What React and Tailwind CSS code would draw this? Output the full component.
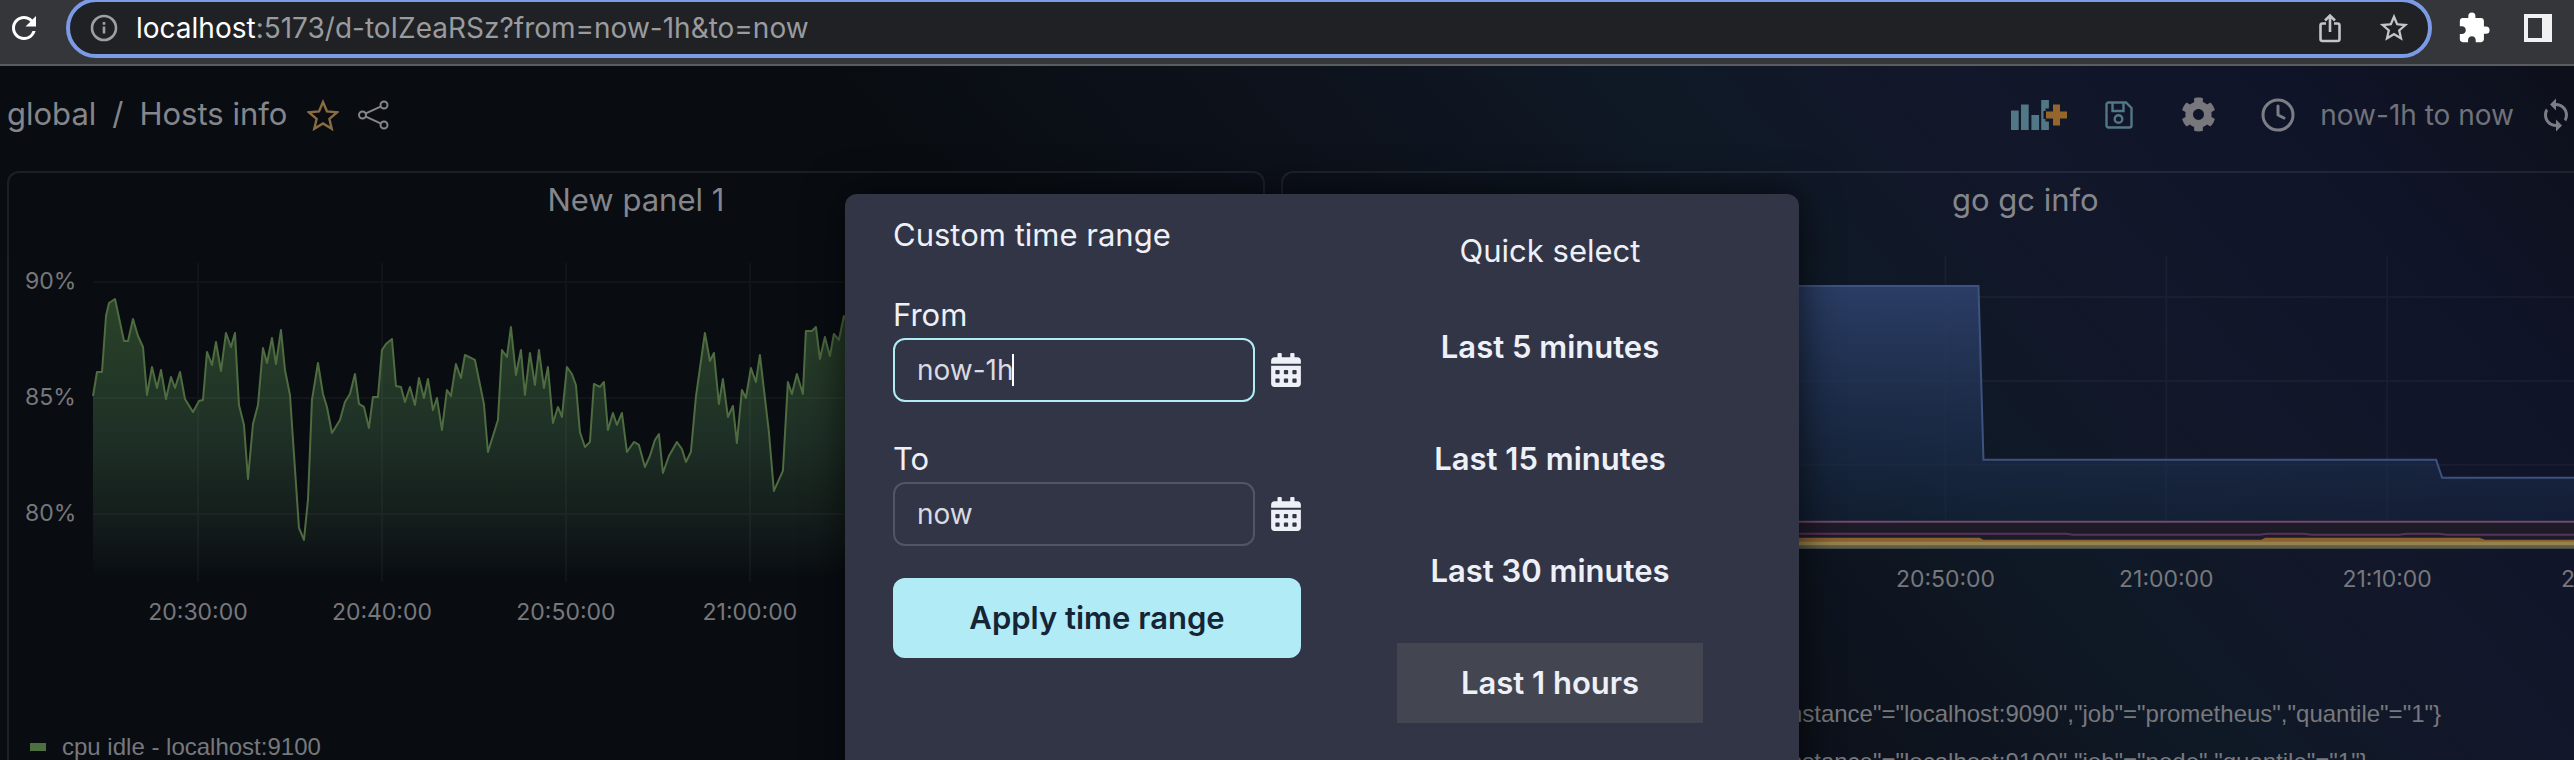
import { FaCalendarAlt, FaCog } from "react-icons/fa";
import { MdExtension, MdStarBorder, MdRefresh, MdSync } from "react-icons/md";
import { FiClock } from "react-icons/fi";

const idlePath =
  "M93,396 L97,372 L102,372 L106,316 L109,303 L115,299 L124,341 L128,341 L133,319 L138,336 L143,347 L147,395 L152,367 L157,388 L161,370 L166,399 L171,377 L175,388 L180,372 L185,399 L193,412 L199,401 L203,400 L207,352 L212,365 L216,342 L221,371 L226,333 L231,347 L235,333 L239,405 L244,425 L248,479 L253,424 L258,405 L263,348 L267,363 L272,338 L276,364 L281,330 L285,370 L290,395 L299,528 L304,540 L308,500 L312,400 L318,363 L323,394 L327,407 L332,433 L340,420 L345,402 L350,394 L355,374 L359,404 L364,407 L369,428 L373,397 L378,397 L382,350 L386,344 L392,339 L396,386 L401,387 L405,402 L410,387 L415,405 L419,378 L424,398 L428,379 L433,410 L437,398 L442,430 L447,390 L451,396 L456,364 L461,378 L465,355 L475,360 L484,404 L488,452 L498,420 L502,350 L507,357 L511,327 L516,375 L521,350 L525,395 L530,353 L535,385 L539,350 L544,388 L548,367 L553,423 L558,407 L562,417 L567,367 L572,374 L576,385 L580,432 L585,447 L590,442 L594,384 L600,387 L604,382 L608,430 L613,413 L617,425 L622,413 L627,452 L634,442 L639,445 L645,467 L650,456 L655,440 L659,434 L663,473 L669,456 L677,442 L682,449 L686,462 L691,452 L696,397 L705,333 L710,361 L714,353 L719,404 L723,379 L728,417 L733,406 L737,443 L742,390 L746,398 L751,368 L756,382 L760,355 L769,432 L774,491 L783,471 L788,382 L792,394 L797,374 L803,394 L806,331 L812,331 L816,327 L820,359 L825,337 L830,356 L834,334 L839,340 L844,316 L852,330 L860,360 L880,340 L900,390 L960,350";

function InfoIcon() {
  return (
    <svg className="size-7" viewBox="0 0 28 28" fill="none" stroke="currentColor" strokeWidth="2.6" aria-hidden="true">
      <circle cx="14" cy="14" r="12" />
      <path d="M14 12.5v7M14 8v2.8" />
    </svg>
  );
}

function UploadIcon() {
  return (
    <svg className="h-[30px] w-6" viewBox="0 0 24 30" fill="none" stroke="currentColor" strokeWidth="2.6" aria-hidden="true">
      <path d="M8 10.500H4.500a2 2 0 0 0-2 2V26a2 2 0 0 0 2 2h15a2 2 0 0 0 2-2V12.500a2 2 0 0 0-2-2H16M12 19V3M7 7.500 12 2.500l5 5" />
    </svg>
  );
}

function SidePanelIcon() {
  return (
    <svg className="size-7" viewBox="0 0 28 28" aria-hidden="true">
      <path fill="currentColor" fillRule="evenodd" d="M0 0h28v28H0zM4 4v20h14V4z" />
    </svg>
  );
}

function StarIcon() {
  return (
    <svg className="size-8" viewBox="0 0 32 32" fill="none" stroke="#8a6c43" strokeWidth="2.4" strokeLinejoin="miter" aria-hidden="true">
      <path d="M16 3l4 9.400 10 .9-7.600 6.600 2.300 9.900L16 24.500l-8.700 5.300 2.300-9.900L2 13.300l10-.9z" />
    </svg>
  );
}

function ShareNodesIcon() {
  return (
    <svg className="size-8" viewBox="0 0 32 32" fill="none" stroke="currentColor" strokeWidth="2" aria-hidden="true">
      <circle cx="5.500" cy="16" r="3.500" />
      <circle cx="27" cy="6" r="3.500" />
      <circle cx="27" cy="26" r="3.500" />
      <path d="M8.800 14.300 23.600 7.600M8.800 17.700l14.800 6.700" />
    </svg>
  );
}

function AddPanelIcon() {
  return (
    <svg className="h-9 w-14" viewBox="0 0 56 36" aria-hidden="true">
      <path fill="#527786" d="M0 13.500h7.700V33H0zM10 7.500h7.700V33H10zM20.400 18h7.700v15h-7.700zM30.200 3h7.700v8.500h-3.400v2.500h-2v8h2v2.500h3.400V33h-7.700z" />
      <path fill="#94662c" d="M42 7.500h7v7h7v7h-7v7h-7v-7h-7v-7h7z" />
    </svg>
  );
}

function SaveIcon() {
  return (
    <svg className="size-7" viewBox="0 0 28 28" fill="none" stroke="#527786" strokeWidth="2.400" aria-hidden="true">
      <path d="M1.500 3.500a2 2 0 0 1 2-2H21l5.500 5.500v17.500a2 2 0 0 1-2 2h-21a2 2 0 0 1-2-2zM7.500 1.500V10h11V1.500" />
      <circle cx="13.500" cy="18" r="3.800" />
    </svg>
  );
}

function BrowserBar() {
  return (
    <div className="flex h-[66px] items-start border-b-2 border-[#5b5c60] bg-[#35363a] text-[#e8eaed]">
      <button aria-label="Reload" className="ml-1 mt-2 flex size-10 shrink-0 items-center justify-center text-white">
        <MdRefresh className="size-9" />
      </button>
      <div className="-mt-0.5 ml-[22px] flex h-[60px] min-w-0 flex-1 items-center rounded-full border-4 border-[#7c9be6] bg-[#202124] pl-5 pr-[17px]">
        <span className="text-[#9aa0a6]">
          <InfoIcon />
        </span>
        <a href="#address" className="ml-[18px] flex-1 truncate text-[28px] text-[#9a9b9f]">
          <span className="text-white">localhost</span>:5173/d-toIZeaRSz?from=now-1h&amp;to=now
        </a>
        <button aria-label="Share this page" className="mr-[35px] text-[#c4c5c8]">
          <UploadIcon />
        </button>
        <button aria-label="Bookmark this page" className="text-[#c4c5c8]">
          <MdStarBorder className="size-[34px]" />
        </button>
      </div>
      <div className="ml-[25px] mr-[22px] flex h-14 items-center gap-[33px] text-white">
        <button aria-label="Extensions">
          <MdExtension className="size-[34px]" />
        </button>
        <button aria-label="Side panel" className="text-[#f1f1f4]">
          <SidePanelIcon />
        </button>
      </div>
    </div>
  );
}

function Header() {
  return (
    <header className="flex h-[105px] items-center pb-2 pl-[7px] text-[#85868c]">
      <h1 className="text-[31px]">
        global<span className="px-4">/</span>Hosts info
      </h1>
      <div className="ml-5 flex gap-[18px]">
        <button aria-label="Favourite">
          <StarIcon />
        </button>
        <button aria-label="Share">
          <ShareNodesIcon />
        </button>
      </div>
      <div className="ml-auto flex items-center text-[28px] text-[#70727c]">
        <button aria-label="Add panel" className="mr-[38px]">
          <AddPanelIcon />
        </button>
        <button aria-label="Save" className="mr-12">
          <SaveIcon />
        </button>
        <button aria-label="Settings" className="mr-11 text-[#77777c]">
          <FaCog className="size-[35px]" />
        </button>
        <button className="mr-6 flex items-center gap-6">
          <FiClock className="size-9 text-[#7c7d85]" />
          now-1h to now
        </button>
        <button aria-label="Refresh" className="text-[#7c7d85]">
          <MdSync className="size-9" />
        </button>
      </div>
    </header>
  );
}

function IdleChart() {
  return (
    <svg className="block h-auto w-full" viewBox="9 230 1254 410" fontSize="23" fill="#77787d" role="img" aria-label="cpu idle">
      <defs>
        <linearGradient id="idle" x1="0" x2="0" y1="300" y2="577" gradientUnits="userSpaceOnUse">
          <stop offset="0" stopColor="#2a4229" />
          <stop offset=".5" stopColor="#1e3026" />
          <stop offset=".8" stopColor="#1b2720" stopOpacity=".6" />
          <stop offset="1" stopColor="#1e2a26" stopOpacity="0" />
        </linearGradient>
      </defs>
      <path fill="url(#idle)" d={idlePath + " V577 H93 Z"} />
      <path fill="none" stroke="#ffffff" strokeOpacity=".035" strokeWidth="2" d="M93 282H1240M93 398H1240M93 514H1240M198 263V582M382 263V582M566 263V582M750 263V582" />
      <path fill="none" stroke="#4e6c40" strokeWidth="2" strokeLinejoin="round" d={idlePath} />
      <text x="25" y="289">90%</text>
      <text x="25" y="405">85%</text>
      <text x="25" y="521">80%</text>
      <g textAnchor="middle">
        <text x="198" y="620">20:30:00</text>
        <text x="382" y="620">20:40:00</text>
        <text x="566" y="620">20:50:00</text>
        <text x="750" y="620">21:00:00</text>
      </g>
    </svg>
  );
}

function GcChart() {
  return (
    <svg className="block h-auto w-full" viewBox="1283 230 1486 370" fontSize="23" fill="#77787d" role="img" aria-label="go gc duration">
      <defs>
        <linearGradient id="gc" x1="0" x2="0" y1="285" y2="549" gradientUnits="userSpaceOnUse">
          <stop offset="0" stopColor="#2c3f68" stopOpacity=".95" />
          <stop offset=".65" stopColor="#1d3050" stopOpacity=".6" />
          <stop offset="1" stopColor="#142a44" stopOpacity=".3" />
        </linearGradient>
      </defs>
      <path fill="none" stroke="#ffffff" strokeOpacity=".035" strokeWidth="2" d="M1400 297H2750M1400 381H2750M1400 465H2750M1946 256V549M2167 256V549M2388 256V549M2609 256V549" />
      <path fill="url(#gc)" d="M1400 286H1979L1984 460H2437L2443 478H2760V549H1400z" />
      <path fill="none" stroke="#3d5280" strokeWidth="2" d="M1400 286H1979L1984 460H2437L2443 478H2760" />
      <path fill="#1e1b28" d="M1400 522H2760V539H1400z" />
      <path fill="none" stroke="#704a68" strokeWidth="2" d="M1400 522H2760" />
      <path fill="none" stroke="#57335a" strokeWidth="2" d="M1400 534H2066L2074 535H2260L2268 534H2305L2312 535H2400L2408 534H2440L2448 535H2760" />
      <path fill="#8a6230" d="M1400 538H1980L1984 540H2262L2266 538H2480L2486 540H2760V545H1400z" />
      <path fill="#96824a" d="M1400 542H2760V546H1400z" />
      <path fill="#5c5d4c" d="M1400 546H2760V549H1400z" />
      <g textAnchor="middle">
        <text x="1946" y="587">20:50:00</text>
        <text x="2167" y="587">21:00:00</text>
        <text x="2388" y="587">21:10:00</text>
        <text x="2609" y="587">21:20:00</text>
      </g>
    </svg>
  );
}

function Panel({ title, children }) {
  return (
    <section className="rounded-t-xl border-2 border-b-0 border-white/8">
      <h2 className="flex h-[57px] items-center justify-center pb-0.5 text-[31px] text-[#85868c]">{title}</h2>
      {children}
    </section>
  );
}

function TimeField({ id, label, value, active }) {
  return (
    <div>
      <label htmlFor={id} className="block text-[31px] leading-[42px]">
        {label}
      </label>
      <div className="mt-0.5 flex items-center gap-4">
        <div className="relative flex-1">
          <input
            id={id}
            defaultValue={value}
            autoFocus={active}
            className="block h-16 w-full rounded-xl border-2 border-white/16 bg-transparent px-[22px] text-[28px] text-[#d9dbe4] caret-transparent outline-none focus:border-[#b0ebf6]"
          />
          {active && <span aria-hidden="true" className="absolute left-[119px] top-4 h-8 w-0.5 bg-white" />}
        </div>
        <button type="button" aria-label={"Pick " + label + " date"}>
          <FaCalendarAlt className="h-[34px] w-[30px]" />
        </button>
      </div>
    </div>
  );
}

function TimeDialog() {
  const ranges = ["Last 5 minutes", "Last 15 minutes", "Last 30 minutes", "Last 1 hours"];
  return (
    <div role="dialog" aria-label="Time range" className="absolute left-[845px] top-[194px] flex h-[700px] w-[954px] gap-24 rounded-xl bg-[#323546] pl-12 pr-24 text-[#eef0f8] shadow-[0_0_40px_rgba(0,0,0,0.7)]">
      <form className="flex w-[408px] flex-col pt-5">
        <h2 className="text-[31px] leading-[42px]">Custom time range</h2>
        <div className="mt-[38px] flex flex-col gap-9">
          <TimeField id="from" label="From" value="now-1h" active />
          <TimeField id="to" label="To" value="now" />
        </div>
        <button type="button" className="mt-8 h-20 rounded-xl bg-[#b0ebf6] text-[31px] font-semibold text-[#152536]">
          Apply time range
        </button>
      </form>
      <div className="flex flex-1 flex-col items-stretch pt-9">
        <h2 className="text-center text-[31px] leading-[42px]">Quick select</h2>
        <div className="mt-[35px] flex flex-col gap-8">
          {ranges.map((r) => (
            <button key={r} type="button" className="h-20 text-[31px] font-semibold last:bg-[#434551]">
              {r}
            </button>
          ))}
        </div>
      </div>
    </div>
  );
}

export default function App() {
  return (
    <div className="relative h-screen overflow-hidden bg-[#090d12] font-['Inter','Liberation_Sans',sans-serif]">
      <BrowserBar />
      <main className="h-full bg-[linear-gradient(49deg,#090d12_46%,#0d121c_60%,#0f1926_71%,#12172a_80%,#101429_90%,#0d101a_100%)]">
        <Header />
        <div className="grid h-full grid-cols-[49%_58%] gap-4 pl-[7px]">
          <Panel title="New panel 1">
            <IdleChart />
            <p className="mt-[89px] flex items-center gap-4 pl-[21px] font-['Liberation_Sans',sans-serif] text-[24px] leading-9 text-[#77787d]">
              <span className="h-2 w-4 bg-[#4d7040]" />
              cpu idle - localhost:9100
            </p>
          </Panel>
          <Panel title="go gc info">
            <GcChart />
            <div className="mt-[90px] pl-[216px] font-['Liberation_Sans',sans-serif] text-[24px] leading-[48px] whitespace-nowrap text-[#77787d]">
              <p>{'go_gc_duration_seconds{"instance"="localhost:9090","job"="prometheus","quantile"="1"}'}</p>
              <p>{'go_gc_duration_seconds{"instance"="localhost:9100","job"="node","quantile"="1"}'}</p>
            </div>
          </Panel>
        </div>
      </main>
      <TimeDialog />
    </div>
  );
}
